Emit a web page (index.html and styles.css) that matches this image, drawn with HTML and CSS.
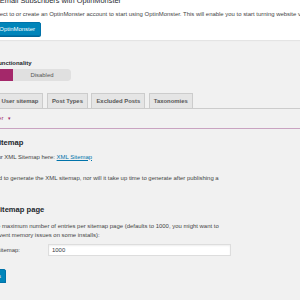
FILE: index.html
```html
<!DOCTYPE html>
<html>
<head>
    <title>XML Sitemaps</title>
    <meta name="viewport" content="width=device-width, initial-scale=1.0">
    <link rel="stylesheet" href="styles.css">
</head>
<body>
    <div class="wrap">
        <div class="notice">
            <h3 class="notice-title">Get More Email Subscribers with OptinMonster</h3>
            <p class="notice-text">Please connect to or create an OptinMonster account to start using OptinMonster. This will enable you to start turning website visitors into subscribers &amp; customers.</p>
            <a class="button button-connect">Connect to OptinMonster</a>
        </div>

        <div class="settings">
            <div class="switch-label">XML sitemap functionality</div>
            <div class="switch-toggle">
                <span class="switch-on">Enabled</span>
                <span class="switch-off">Disabled</span>
            </div>

            <nav class="nav-tabs">
                <a class="nav-tab nav-tab-active">General</a>
                <a class="nav-tab">User sitemap</a>
                <a class="nav-tab">Post Types</a>
                <a class="nav-tab">Excluded Posts</a>
                <a class="nav-tab">Taxonomies</a>
            </nav>

            <div class="help-center">
                <span class="help-toggle">Help center <span class="arrow">&#9662;</span></span>
            </div>

            <div class="tab-content">
                <h2 class="heading-first">Your XML Sitemap</h2>
                <p class="p-first">You can find your XML Sitemap here: <a class="link">XML Sitemap</a></p>
                <p class="p-second">You do not need to generate the XML sitemap, nor will it take up time to generate after publishing a post.</p>

                <h2 class="heading-second">Entries per sitemap page</h2>
                <p class="p-third">Please enter the maximum number of entries per sitemap page (defaults to 1000, you might want to lower this to prevent memory issues on some installs):</p>

                <div class="field-row">
                    <label class="field-label">Max entries per sitemap:</label>
                    <div class="field-input">1000</div>
                </div>

                <a class="button button-save">Save Changes</a>
            </div>
        </div>
    </div>
</body>
</html>
```

FILE: styles.css
```css
body {
    margin: 0;
    background-color: #f1f1f1;
    font-family: "Liberation Sans", Arial, sans-serif;
    font-size: 5.95px;
    line-height: 8.55px;
    color: #444;
    overflow: hidden;
}

.wrap {
    width: 440px;
    margin: -8px 0 0 -43px;
}

/* kotak notice OptinMonster */
.notice {
    background-color: #fff;
    padding: 4px 0 4px 10px;
    box-shadow: 0 1px 1px rgba(0,0,0,0.05);
}

.notice-title {
    margin: 0;
    font-size: 7.4px;
    line-height: 10px;
    font-weight: normal;
    color: #23282d;
}

.notice-text {
    margin: 3.7px 0 0;
    white-space: nowrap;
}

.button {
    display: block;
    width: max-content;
    box-sizing: border-box;
    height: 14px;
    line-height: 12px;
    border-radius: 2px;
    background-color: #0085ba;
    border: 1px solid #0073aa;
    box-shadow: 0 1px 0 #006799;
    color: #fff;
}

.button-connect {
    margin: 3.75px 0 0 -4px;
    padding: 0 5px;
}

.settings {
    width: 100%;
}

.switch-label {
    margin: 18.7px 0 0 1px;
    font-weight: bold;
    color: #23282d;
}

.switch-toggle {
    display: flex;
    width: 116px;
    height: 12px;
    margin: 1.7px 0 0 -2px;
    border-radius: 3px;
    overflow: hidden;
}

.switch-toggle span {
    flex: 1;
    text-align: center;
    line-height: 12px;
}

.switch-on {
    background-color: #a4286a;
    color: #fff;
}

.switch-off {
    background-color: #e0e0e0;
    color: #555;
    border-radius: 0 3px 3px 0;
}

/* tab navigasi */
.nav-tabs {
    display: flex;
    align-items: flex-end;
    gap: 3.5px;
    margin-top: 12px;
    padding-left: 4px;
    border-bottom: 1px solid #ccc;
}

.nav-tab {
    line-height: 14px;
    padding: 0 4px;
    border: 1px solid #ccc;
    border-bottom: none;
    background-color: #e5e5e5;
    color: #555;
    font-size: 5.9px;
    font-weight: bold;
}

.nav-tab-active {
    background-color: #f1f1f1;
    margin-bottom: -1px;
    border-bottom: 1px solid #f1f1f1;
    color: #000;
}

.help-center {
    padding: 4.7px 0 5.7px 16px;
    border-bottom: 1px solid #c9a3c1;
}

.help-toggle {
    color: #a4286a;
}

.arrow {
    margin-left: 3px;
    font-size: 5px;
}

.tab-content {
    width: 274px;
}

h2 {
    margin: 0;
    font-size: 7.6px;
    line-height: 10px;
    font-weight: bold;
    color: #23282d;
}

.heading-first {
    margin-top: 9px;
}

.p-first {
    margin: 4.7px 0 0;
}

.p-second {
    margin: 12.45px 0 0;
    padding-left: 2px;
}

.heading-second {
    margin: 14.75px 0 0 -3px;
}

.p-third {
    margin: 6.7px 0 0;
}

.link {
    color: #0073aa;
    text-decoration: underline;
}

.field-row {
    display: flex;
    align-items: center;
    margin: 5.2px 0 0 -2px;
}

.field-label {
    width: 93px;
    flex-shrink: 0;
}

.field-input {
    width: 183px;
    height: 12px;
    box-sizing: border-box;
    padding-left: 3px;
    line-height: 10px;
    background-color: #fff;
    border: 1px solid #ddd;
    box-shadow: inset 0 1px 2px rgba(0,0,0,0.07);
    color: #32373c;
}

.button-save {
    margin-top: 13px;
    padding: 0 4px;
}
```
